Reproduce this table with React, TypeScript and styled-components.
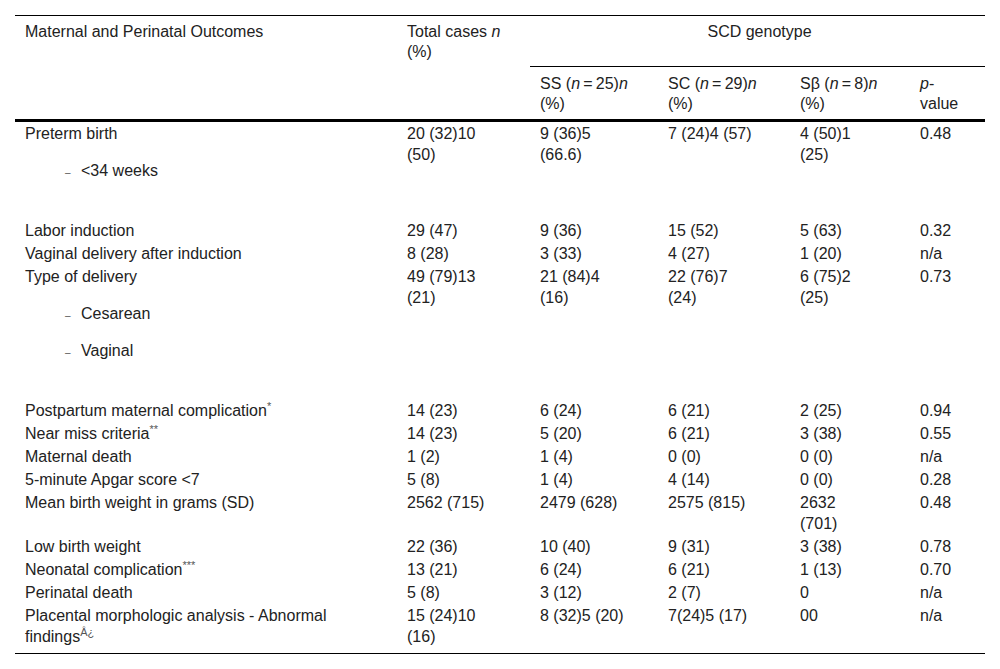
import styled, { createGlobalStyle } from "styled-components";

interface Outcome {
  label: string;
  note?: string;
  sub?: string[];
  total: string;
  ss: string;
  sc: string;
  sb: string;
  p: string;
}

const outcomes: Outcome[] = [
  { label: "Preterm birth", sub: ["<34 weeks"], total: "20 (32)10\n(50)", ss: "9 (36)5\n(66.6)", sc: "7 (24)4 (57)", sb: "4 (50)1\n(25)", p: "0.48" },
  { label: "Labor induction", total: "29 (47)", ss: "9 (36)", sc: "15 (52)", sb: "5 (63)", p: "0.32" },
  { label: "Vaginal delivery after induction", total: "8 (28)", ss: "3 (33)", sc: "4 (27)", sb: "1 (20)", p: "n/a" },
  { label: "Type of delivery", sub: ["Cesarean", "Vaginal"], total: "49 (79)13\n(21)", ss: "21 (84)4\n(16)", sc: "22 (76)7\n(24)", sb: "6 (75)2\n(25)", p: "0.73" },
  { label: "Postpartum maternal complication", note: "*", total: "14 (23)", ss: "6 (24)", sc: "6 (21)", sb: "2 (25)", p: "0.94" },
  { label: "Near miss criteria", note: "**", total: "14 (23)", ss: "5 (20)", sc: "6 (21)", sb: "3 (38)", p: "0.55" },
  { label: "Maternal death", total: "1 (2)", ss: "1 (4)", sc: "0 (0)", sb: "0 (0)", p: "n/a" },
  { label: "5-minute Apgar score <7", total: "5 (8)", ss: "1 (4)", sc: "4 (14)", sb: "0 (0)", p: "0.28" },
  { label: "Mean birth weight in grams (SD)", total: "2562 (715)", ss: "2479 (628)", sc: "2575 (815)", sb: "2632\n(701)", p: "0.48" },
  { label: "Low birth weight", total: "22 (36)", ss: "10 (40)", sc: "9 (31)", sb: "3 (38)", p: "0.78" },
  { label: "Neonatal complication", note: "***", total: "13 (21)", ss: "6 (24)", sc: "6 (21)", sb: "1 (13)", p: "0.70" },
  { label: "Perinatal death", total: "5 (8)", ss: "3 (12)", sc: "2 (7)", sb: "0", p: "n/a" },
  { label: "Placental morphologic analysis - Abnormal\nfindings", note: "Â¿", total: "15 (24)10\n(16)", ss: "8 (32)5 (20)", sc: "7(24)5 (17)", sb: "00", p: "n/a" },
];

const widths = [382, 133, 128, 132, 120, 75];

const App = () => {
  return (
    <Wrap>
      <GlobalStyle />
      <Table>
        <colgroup>
          {widths.map((w, i) => (
            <col key={i} style={{ width: w }} />
          ))}
        </colgroup>
        <thead>
          <tr>
            <SideHead rowSpan={2}>Maternal and Perinatal Outcomes</SideHead>
            <SideHead rowSpan={2}>
              Total cases <i>n</i>
              <br />
              (%)
            </SideHead>
            <GroupHead colSpan={4}>SCD genotype</GroupHead>
          </tr>
          <tr>
            <SubHead>
              SS (<i>n</i>&thinsp;=&thinsp;25)<i>n</i>
              <br />
              (%)
            </SubHead>
            <SubHead>
              SC (<i>n</i>&thinsp;=&thinsp;29)<i>n</i>
              <br />
              (%)
            </SubHead>
            <SubHead>
              Sβ (<i>n</i>&thinsp;=&thinsp;8)<i>n</i>
              <br />
              (%)
            </SubHead>
            <SubHead>
              <i>p</i>-
              <br />
              value
            </SubHead>
          </tr>
        </thead>
        <tbody>
          {outcomes.map((o) => (
            <tr key={o.label}>
              <Cell>
                {o.label}
                {o.note && <Note>{o.note}</Note>}
                {o.sub && (
                  <SubList>
                    {o.sub.map((s) => (
                      <SubItem key={s}>
                        <Dash>–</Dash>
                        {s}
                      </SubItem>
                    ))}
                  </SubList>
                )}
              </Cell>
              <Cell>{o.total}</Cell>
              <Cell>{o.ss}</Cell>
              <Cell>{o.sc}</Cell>
              <Cell>{o.sb}</Cell>
              <Cell>{o.p}</Cell>
            </tr>
          ))}
        </tbody>
      </Table>
    </Wrap>
  );
};

export default App;

const GlobalStyle = createGlobalStyle`
  body {
    margin: 0;
    background: #ffffff;
    font-family: "Liberation Sans", Arial, sans-serif;
  }
`;

const Wrap = styled.div`
  padding: 15px;
`;

const Table = styled.table`
  width: 970px;
  table-layout: fixed;
  border-collapse: separate;
  border-spacing: 0;
  border-top: 1px solid #000;
  border-bottom: 1px solid #000;
  font-size: 16px;
  color: #222;

  tbody tr:last-child td {
    padding-bottom: 6px;
  }
`;

const HeadCell = styled.th`
  font-weight: 400;
  text-align: left;
  vertical-align: top;
  line-height: 20px;
  padding: 6px 6px 5px 10px;
`;

const SideHead = styled(HeadCell)`
  border-bottom: 3px solid #000;
`;

const GroupHead = styled(HeadCell)`
  text-align: center;
  padding-bottom: 24px;
  border-bottom: 1px solid #000;
`;

const SubHead = styled(HeadCell)`
  padding-top: 7px;
  border-bottom: 3px solid #000;
`;

const Cell = styled.td`
  padding: 1px 6px 1px 10px;
  line-height: 21px;
  vertical-align: top;
  white-space: pre-line;
`;

const Note = styled.sup`
  font-size: 11px;
  line-height: 0;
  color: #555;
`;

const SubList = styled.ul`
  list-style: none;
  margin: 0 0 37px;
  padding: 0 0 0 40px;
`;

const SubItem = styled.li`
  display: flex;
  align-items: baseline;
  margin-top: 16px;
`;

const Dash = styled.span`
  flex: none;
  width: 16px;
  font-size: 10px;
  line-height: 10px;
  color: #555;
`;
